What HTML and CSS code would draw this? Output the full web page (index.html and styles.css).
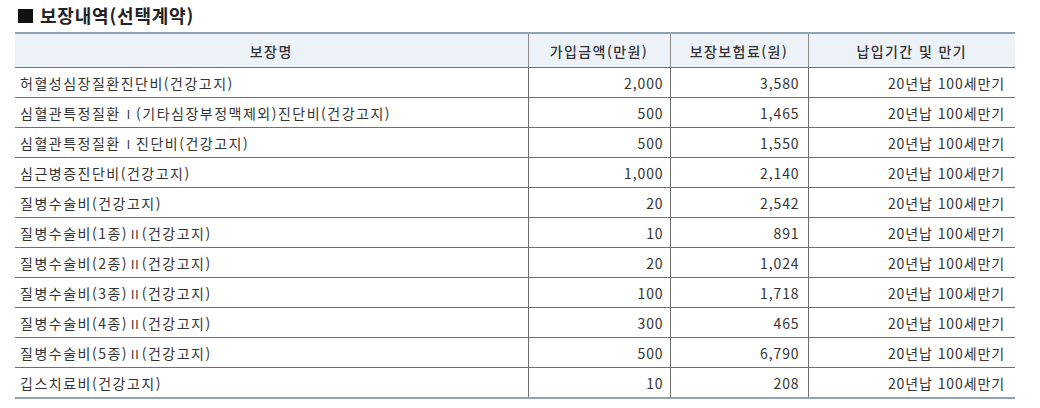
FILE: index.html
```html
<!DOCTYPE html>
<html lang="ko">
<head>
<meta charset="utf-8">
<link rel="stylesheet" href="styles.css">
</head>
<body>
<div class="page">
  <h2 class="title"><span class="sq"></span>보장내역(선택계약)</h2>
  <table class="cov">
    <colgroup>
      <col class="c1"><col class="c2"><col class="c3"><col class="c4">
    </colgroup>
    <thead>
      <tr><th>보장명</th><th>가입금액(만원)</th><th>보장보험료(원)</th><th>납입기간 및 만기</th></tr>
    </thead>
    <tbody>
      <tr><td>허혈성심장질환진단비(건강고지)</td><td class="n">2,000</td><td class="n">3,580</td><td class="n">20년납 100세만기</td></tr>
      <tr><td>심혈관특정질환<span class="rn">I</span>(기타심장부정맥제외)진단비(건강고지)</td><td class="n">500</td><td class="n">1,465</td><td class="n">20년납 100세만기</td></tr>
      <tr><td>심혈관특정질환<span class="rn">I</span>진단비(건강고지)</td><td class="n">500</td><td class="n">1,550</td><td class="n">20년납 100세만기</td></tr>
      <tr><td>심근병증진단비(건강고지)</td><td class="n">1,000</td><td class="n">2,140</td><td class="n">20년납 100세만기</td></tr>
      <tr><td>질병수술비(건강고지)</td><td class="n">20</td><td class="n">2,542</td><td class="n">20년납 100세만기</td></tr>
      <tr><td>질병수술비(1종)<span class="rn2">II</span>(건강고지)</td><td class="n">10</td><td class="n">891</td><td class="n">20년납 100세만기</td></tr>
      <tr><td>질병수술비(2종)<span class="rn2">II</span>(건강고지)</td><td class="n">20</td><td class="n">1,024</td><td class="n">20년납 100세만기</td></tr>
      <tr><td>질병수술비(3종)<span class="rn2">II</span>(건강고지)</td><td class="n">100</td><td class="n">1,718</td><td class="n">20년납 100세만기</td></tr>
      <tr><td>질병수술비(4종)<span class="rn2">II</span>(건강고지)</td><td class="n">300</td><td class="n">465</td><td class="n">20년납 100세만기</td></tr>
      <tr><td>질병수술비(5종)<span class="rn2">II</span>(건강고지)</td><td class="n">500</td><td class="n">6,790</td><td class="n">20년납 100세만기</td></tr>
      <tr><td>깁스치료비(건강고지)</td><td class="n">10</td><td class="n">208</td><td class="n">20년납 100세만기</td></tr>
    </tbody>
  </table>
</div>
</body>
</html>
```

FILE: styles.css
```css
html, body {
  margin: 0;
  padding: 0;
  background: #ffffff;
}
.page {
  padding: 5px 25px 0 15px;
  font-family: "Noto Sans CJK KR", "Noto Sans", sans-serif;
  color: #333333;
}
.title {
  margin: 0 0 6px 3px;
  height: 21px;
  display: flex;
  align-items: center;
  gap: 7px;
  font-size: 18px;
  font-weight: bold;
  color: #222222;
  line-height: 21px;
  letter-spacing: 0.8px;
}
.sq {
  width: 15px;
  height: 14px;
  background: #111111;
}
.cov {
  width: 1000px;
  border-collapse: collapse;
  table-layout: fixed;
  font-size: 14px;
  letter-spacing: 1.5px;
  border-top: 2px solid #8ea3b6;
  border-bottom: 2px solid #8ea3b6;
}
.c1 { width: 513px; }
.c2 { width: 142px; }
.c3 { width: 138px; }
.c4 { width: 207px; }
.cov th {
  height: 33px;
  padding: 0;
  background: #edf2f9;
  font-weight: 500;
  color: #333333;
  border-bottom: 1px solid #6f6f6f;
  border-left: 1px solid #8a8a8a;
  letter-spacing: 1.4px;
}
.cov td {
  height: 29px;
  padding: 0 6px 0 5px;
  border-bottom: 1px solid #6f6f6f;
  border-left: 1px solid #6f6f6f;
  white-space: nowrap;
}
.cov th:first-child, .cov td:first-child {
  border-left: none;
}
.cov tr:last-child td {
  border-bottom: none;
}
.cov td.n {
  text-align: right;
  letter-spacing: 0.9px;
}
.cov td:nth-child(3) { padding-right: 8px; }
.cov td:last-child { padding-right: 10px; }
.rn {
  margin: 0 6px 0 6px;
  font-family: "Liberation Sans", sans-serif;
  font-size: 12px;
  letter-spacing: 0;
}
.rn2 {
  margin: 0 2px 0 3px;
  font-family: "Liberation Sans", sans-serif;
  font-size: 12px;
  letter-spacing: 1px;
}
```
